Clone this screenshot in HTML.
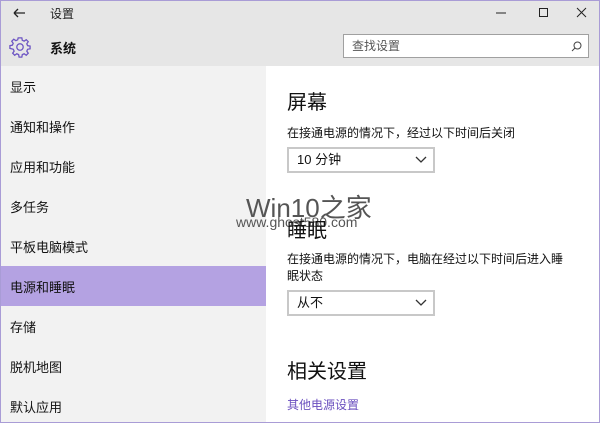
<!DOCTYPE html><html><head><meta charset="utf-8"><style>
body{margin:0;width:600px;height:423px;overflow:hidden;font-family:"Liberation Sans","Noto Sans CJK SC",sans-serif;background:#fff;position:relative}
.a{position:absolute}
.hd{left:0;top:0;width:600px;height:66px;background:#e6e6e6}
.sb{left:0;top:66px;width:266px;height:357px;background:#f2f2f2}
.it{position:absolute;left:10px;font-size:13px;color:#111}
.sel{left:0;top:266px;width:266px;height:40px;background:#b4a2e2}
.dd{position:absolute;left:287px;width:148px;height:26px;border:2px solid #c8c8c8;box-sizing:border-box;font-size:13px;line-height:22px;padding-left:8px;color:#111}
.dd svg{position:absolute;right:6px;top:7px}
</style></head><body>
<div class="a hd"></div>
<div class="a sb"></div>
<div class="a sel"></div>
<div class="a" style="left:0;top:0;width:598px;height:421px;border:1px solid #a99cd6"></div>
<svg class="a" style="left:12px;top:6px" width="14" height="14"><path d="M2 7H13M2 7L6 3M2 7L6 11" stroke="#222" stroke-width="1.3" fill="none"/></svg>
<div class="a" style="left:50px;top:5px;font-size:12px;color:#222">设置</div>
<svg class="a" style="left:495px;top:6px" width="100" height="14"><path d="M1 7H11" stroke="#222"/><path d="M44.5 2.5h8v8h-8z" stroke="#222" fill="none"/><path d="M82 2L91 11M91 2L82 11" stroke="#222"/></svg>
<svg class="a" style="left:9px;top:36px" width="22" height="22" viewBox="0 0 24 24"><path d="M12 2l2 0 .5 2.7 2 .9 2.3-1.6 2.2 2.2-1.6 2.3.9 2 2.7.5v3l-2.7.5-.9 2 1.6 2.3-2.2 2.2-2.3-1.6-2 .9-.5 2.7h-3l-.5-2.7-2-.9-2.3 1.6-2.2-2.2 1.6-2.3-.9-2L1 13.5v-3l2.7-.5.9-2L3 5.7 5.2 3.5l2.3 1.6 2-.9L10 2z" fill="none" stroke="#6d55c3" stroke-width="1.4"/><circle cx="12" cy="12" r="3.5" fill="none" stroke="#6d55c3" stroke-width="1.4"/></svg>
<div class="a" style="left:50px;top:38px;font-size:13px;font-weight:bold;color:#111">系统</div>
<div class="a" style="left:343px;top:34px;width:246px;height:24px;border:1px solid #a0a0a0;background:#fff;box-sizing:border-box;font-size:12px;color:#555;line-height:22px;padding-left:8px">查找设置<svg style="position:absolute;right:6px;top:6px" width="11" height="11"><circle cx="6.5" cy="4.5" r="3.5" fill="none" stroke="#444"/><path d="M4 7L1 10" stroke="#444"/></svg></div>
<div class="it" style="top:77px">显示</div>
<div class="it" style="top:117px">通知和操作</div>
<div class="it" style="top:157px">应用和功能</div>
<div class="it" style="top:197px">多任务</div>
<div class="it" style="top:237px">平板电脑模式</div>
<div class="it" style="top:277px">电源和睡眠</div>
<div class="it" style="top:317px">存储</div>
<div class="it" style="top:357px">脱机地图</div>
<div class="it" style="top:397px">默认应用</div>
<div class="a" style="left:287px;top:86px;font-size:20px;color:#111">屏幕</div>
<div class="a" style="left:287px;top:124px;font-size:12px;color:#111">在接通电源的情况下，经过以下时间后关闭</div>
<div class="dd" style="top:147px">10 分钟<svg width="12" height="8"><path d="M1 1L6 6L11 1" stroke="#333" fill="none" stroke-width="1.3"/></svg></div>
<div class="a" style="left:246px;top:188px;font-size:26px;color:#555">Win10之家</div>
<div class="a" style="left:236px;top:214px;font-size:14px;color:#555">www.ghost580.com</div>
<div class="a" style="left:287px;top:214px;font-size:20px;color:#111">睡眠</div>
<div class="a" style="left:287px;top:251px;font-size:12px;color:#111;width:285px;line-height:17px">在接通电源的情况下，电脑在经过以下时间后进入睡眠状态</div>
<div class="dd" style="top:290px">从不<svg width="12" height="8"><path d="M1 1L6 6L11 1" stroke="#333" fill="none" stroke-width="1.3"/></svg></div>
<div class="a" style="left:287px;top:355px;font-size:20px;color:#111">相关设置</div>
<div class="a" style="left:287px;top:396px;font-size:12px;color:#6a4fbf">其他电源设置</div>
</body></html>
